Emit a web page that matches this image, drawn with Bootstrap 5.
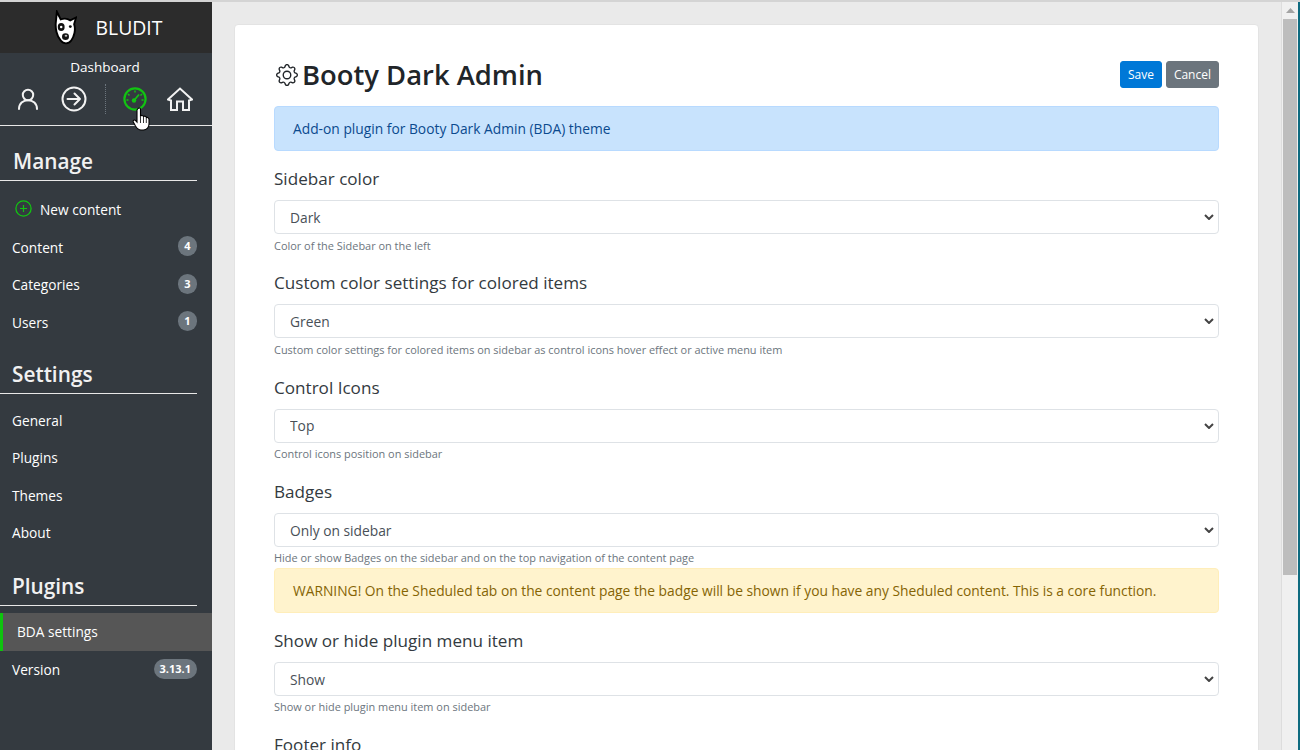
<!DOCTYPE html>
<html lang="en">
<head>
    <meta charset="UTF-8">
    <meta name="viewport" content="width=device-width, initial-scale=1.0">
    <title>Booty Dark Admin - Bludit</title>
    <link href="https://cdn.jsdelivr.net/npm/bootstrap@5.3.0/dist/css/bootstrap.min.css" rel="stylesheet">
    <style>
        html, body { height: 750px; overflow: hidden; }
        body { font-family: "Open Sans", "Noto Sans", sans-serif; background: #eaeaea; color: #212529; border-top: 2px solid #d4d4d4; }
        .app-shell { height: 748px; overflow: hidden; }

        .side-panel { width: 212px; flex: none; background: #343a40; color: #fff; font-size: 13.7px; }
        .brand-bar { height: 51px; background: #2c2c2c; font-size: 19.4px; gap: 19px; padding-left: 4px; }
        .ctrl-title { height: 28px; padding: 4px 2px 0 0; font-size: 13.5px; }
        .ctrl-row { height: 45px; position: relative; border-bottom: 1px solid #e8e8e8; }
        .ctrl-icons { padding: 0 0 9px 16px; height: 45px; }
        .ctrl-out { margin-left: 21px; }
        .ctrl-sep { width: 0; height: 30px; border-left: 1px dotted #6c757d; margin: 0 17px 0 18px; }
        .ctrl-home { margin-left: 20px; }
        .hand-cursor { position: absolute; left: 132px; top: 26px; }
        .side-head { font-size: 20.8px; font-weight: 600; color: #f1f1f1; margin: 18.5px 15px 0 0; padding: 0 0 4px 12px; border-bottom: 1px solid #e8e8e8; line-height: 30px; }
        .first-head { margin-top: 20px; padding-left: 13px; }
        .second-head { margin-top: 17px; }
        .side-link { display: flex; justify-content: space-between; height: 37.5px; padding: 0 15px 0 12px; align-items: center; color: #fff; text-decoration: none; }
        .side-link.after-head { margin-top: 8.5px; }
        .side-link.new-link { height: 38.5px; margin-top: 10px; }
        .side-link.is-active { background: #565656; border-left: 3px solid #0ec40e; padding-left: 14px; height: 38px; margin-top: 7px; }
        .side-link.version-link { height: 39px; }
        .side-pill { background: #6c757d; color: #fff; font-size: 11px; font-weight: 700; border-radius: 11px; min-width: 19px; height: 20px; line-height: 20px; padding: 0 6px; text-align: center; margin-top: -4px; }
        .pill-round { padding: 0 5px; }
        .new-icon { margin: -4px 0 0 3px; }

        .main-area { flex: 1 1 auto; min-width: 0; padding: 22px 22px 0 22px; border-right: 1px solid #ddd; }
        .form-sheet { background: #fff; border: 1px solid #e3e3e3; border-radius: 4px; padding: 33px 39px 0; height: 760px; }
        .sheet-title { font-size: 27.4px; font-weight: 600; line-height: 34px; margin: 0 0 2px; display: flex; align-items: center; gap: 4px; }
        .title-gear { margin-left: 2px; }
        .act-wrap { margin-top: -3px; }
        .act-btn { font-size: 12px; padding: 0 7px; height: 27px; line-height: 25px; border-radius: 3px; }
        .btn-save { background: #0078d7; border-color: #0078d7; color: #fff; }
        .note-box { font-size: 13.8px; padding: 13px 18px; margin: 12px 0 15px; height: 45px; line-height: 18px; border-radius: 4px; }
        .note-info { background: #c8e3fd; border: 1px solid #b8daff; color: #0b4a8e; }
        .note-warn { background: #fff3cd; border: 1px solid #ffeeba; color: #856404; margin: 3px 0 15px; }
        .field-label { font-size: 17.1px; line-height: 24px; padding-top: 1px; margin-bottom: 9px; color: #333a40; display: block; }
        .field-select { font-size: 13.8px; height: 34px; padding: 2px 36px 0 15px; border-radius: 4px; color: #495057;
            background-image: url("data:image/svg+xml,%3csvg xmlns='http://www.w3.org/2000/svg' viewBox='0 0 10 6'%3e%3cpath fill='none' stroke='%23444' stroke-width='2' d='M1 1l4 4 4-4'/%3e%3c/svg%3e");
            background-size: 10px 6px; background-position: right 4px center; }
        .field-help { font-size: 10.95px; line-height: 15px; color: #6c757d; margin: 3.5px 0 17.8px; }
        .field-help.tight { margin-bottom: -.5px; }

        .fake-scroll { width: 16px; flex: none; background: #f0f0f0; }
        .scroll-arrow { height: 17px; color: #a3a3a3; display: flex; justify-content: center; padding-top: 6px; }
        .scroll-thumb { height: 556px; margin: 0 1px; background: #bdbdbd; }
        .window-edge { width: 2px; flex: none; background: #0f6b80; }
    </style>
</head>
<body>
    <div class="app-shell d-flex">
        <aside class="side-panel">
            <div class="brand-bar d-flex align-items-center justify-content-center">
                <svg width="23" height="36" viewBox="0 0 24 36">
                    <path d="M3 1 L7 9 C10 8 14 8 17 10 L23 7 L21 14 C23 20 21 27 18 31 C15 35 10 35 7 31 C3 27 1 18 2 11 Z" fill="#fff" stroke="#000" stroke-width="2"/>
                    <ellipse cx="7.5" cy="17" rx="3.6" ry="4.2" fill="#111"/>
                    <circle cx="7.5" cy="17" r="1.3" fill="#fff"/>
                    <circle cx="17" cy="16.5" r="1.5" fill="#111"/>
                    <ellipse cx="12" cy="27" rx="3.6" ry="3.4" fill="#111"/>
                    <ellipse cx="12.5" cy="26" rx="1.4" ry="1" fill="#bbb"/>
                </svg>
                <span>BLUDIT</span>
            </div>
            <div class="ctrl-title text-center">Dashboard</div>
            <div class="ctrl-row">
                <div class="ctrl-icons d-flex align-items-center">
                    <svg width="24" height="24" viewBox="0 0 24 24" fill="none" stroke="#f2f2f2" stroke-width="2">
                        <circle cx="12" cy="8" r="5.2"/>
                        <path d="M3 22 C3 16.5 7 13.3 12 13.3 S21 16.5 21 22" stroke-linecap="round"/>
                    </svg>
                    <svg class="ctrl-out" width="26" height="26" viewBox="0 0 26 26" fill="none" stroke="#f2f2f2" stroke-width="2">
                        <circle cx="13" cy="13" r="11.5"/>
                        <path d="M6.5 13 H19 M13.5 7.5 L19 13 L13.5 18.5" stroke-linecap="round" stroke-linejoin="round"/>
                    </svg>
                    <div class="ctrl-sep"></div>
                    <svg width="24" height="24" viewBox="0 0 24 24" fill="none" stroke="#12c312" stroke-width="2.2">
                        <circle cx="12" cy="12" r="10.6"/>
                        <path d="M12 3.5 V5.5 M5 7 L6.5 8.5 M3.5 13 H5.5 M19 7 L17.5 8.5 M20.5 13 H18.5" stroke-width="1.5"/>
                        <path d="M11 13.5 L16 7.5" stroke-width="1.8"/>
                        <circle cx="11" cy="13.5" r="2.2" fill="#12c312" stroke="none"/>
                    </svg>
                    <svg class="ctrl-home" width="26" height="24" viewBox="0 0 26 24" fill="none" stroke="#f2f2f2" stroke-width="2">
                        <path d="M1 12.5 L13 1.5 L25 12.5 L22 13.5 V23 H16 V14.5 H10 V23 H4 V13.5 Z"/>
                    </svg>
                </div>
                <svg class="hand-cursor" width="19" height="24" viewBox="0 0 19 24">
                    <path d="M6 1.5 C7 .5 8.5 1 8.5 2.5 V9 C9.5 8 11 8.3 11.5 9.5 C12.5 8.8 14 9.2 14.3 10.5 C15.5 10 17 10.8 17 12.5 V17 C17 20 15 23 11.5 23 H9 C6 23 5 21.5 3.5 19 L1.3 15 C.6 13.5 2.3 12.3 3.6 13.5 L5 15 V3 Z" fill="#fff" stroke="#000" stroke-width="1.1"/>
                    <path d="M8.5 10 V16 M11.5 10 V16 M14.3 11 V16" stroke="#000" stroke-width=".8"/>
                </svg>
            </div>

            <div class="side-head first-head">Manage</div>
            <a href="#" class="side-link new-link">
                <span class="d-flex align-items-center gap-2">
                    <svg class="new-icon" width="17" height="17" viewBox="0 0 17 17" fill="none" stroke="#12c312">
                        <circle cx="8.5" cy="8.5" r="7.6" stroke-width="1.3"/>
                        <path d="M8.5 5 V12 M5 8.5 H12" stroke-width="1.2"/>
                    </svg>
                    New content
                </span>
            </a>
            <a href="#" class="side-link"><span>Content</span><span class="side-pill pill-round">4</span></a>
            <a href="#" class="side-link"><span>Categories</span><span class="side-pill pill-round">3</span></a>
            <a href="#" class="side-link"><span>Users</span><span class="side-pill pill-round">1</span></a>

            <div class="side-head second-head">Settings</div>
            <a href="#" class="side-link after-head">General</a>
            <a href="#" class="side-link">Plugins</a>
            <a href="#" class="side-link">Themes</a>
            <a href="#" class="side-link">About</a>

            <div class="side-head">Plugins</div>
            <a href="#" class="side-link is-active">BDA settings</a>
            <a href="#" class="side-link version-link"><span>Version</span><span class="side-pill">3.13.1</span></a>
        </aside>

        <main class="main-area">
            <div class="form-sheet">
                <div class="d-flex justify-content-between align-items-center">
                    <h2 class="sheet-title">
                        <svg class="title-gear" width="22" height="22" viewBox="0 0 16 16" fill="#212529">
                            <path d="M8 4.754a3.246 3.246 0 1 0 0 6.492 3.246 3.246 0 0 0 0-6.492zM5.754 8a2.246 2.246 0 1 1 4.492 0 2.246 2.246 0 0 1-4.492 0z"/>
                            <path d="M9.796 1.343c-.527-1.79-3.065-1.79-3.592 0l-.094.319a.873.873 0 0 1-1.255.52l-.292-.16c-1.64-.892-3.433.902-2.54 2.541l.159.292a.873.873 0 0 1-.52 1.255l-.319.094c-1.79.527-1.79 3.065 0 3.592l.319.094a.873.873 0 0 1 .52 1.255l-.16.292c-.892 1.64.901 3.434 2.541 2.54l.292-.159a.873.873 0 0 1 1.255.52l.094.319c.527 1.79 3.065 1.79 3.592 0l.094-.319a.873.873 0 0 1 1.255-.52l.292.16c1.64.893 3.434-.902 2.54-2.541l-.159-.292a.873.873 0 0 1 .52-1.255l.319-.094c1.79-.527 1.79-3.065 0-3.592l-.319-.094a.873.873 0 0 1-.52-1.255l.16-.292c.893-1.64-.902-3.433-2.541-2.54l-.292.159a.873.873 0 0 1-1.255-.52l-.094-.319zm-2.633.283c.246-.835 1.428-.835 1.674 0l.094.319a1.873 1.873 0 0 0 2.693 1.115l.291-.16c.764-.415 1.6.42 1.184 1.185l-.159.292a1.873 1.873 0 0 0 1.116 2.692l.318.094c.835.246.835 1.428 0 1.674l-.319.094a1.873 1.873 0 0 0-1.115 2.693l.16.291c.415.764-.42 1.6-1.185 1.184l-.291-.159a1.873 1.873 0 0 0-2.693 1.116l-.094.318c-.246.835-1.428.835-1.674 0l-.094-.319a1.873 1.873 0 0 0-2.692-1.115l-.292.16c-.764.415-1.6-.42-1.184-1.185l.159-.291A1.873 1.873 0 0 0 1.945 8.93l-.319-.094c-.835-.246-.835-1.428 0-1.674l.319-.094A1.873 1.873 0 0 0 3.06 4.377l-.16-.292c-.415-.764.42-1.6 1.185-1.184l.292.159a1.873 1.873 0 0 0 2.692-1.115l.094-.319z"/>
                        </svg>
                        Booty Dark Admin
                    </h2>
                    <div class="act-wrap d-flex gap-1">
                        <button class="btn act-btn btn-save">Save</button>
                        <button class="btn btn-secondary act-btn">Cancel</button>
                    </div>
                </div>

                <div class="note-box note-info">Add-on plugin for Booty Dark Admin (BDA) theme</div>

                <label class="field-label">Sidebar color</label>
                <select class="form-select field-select"><option>Dark</option></select>
                <div class="field-help">Color of the Sidebar on the left</div>

                <label class="field-label">Custom color settings for colored items</label>
                <select class="form-select field-select"><option>Green</option></select>
                <div class="field-help">Custom color settings for colored items on sidebar as control icons hover effect or active menu item</div>

                <label class="field-label">Control Icons</label>
                <select class="form-select field-select"><option>Top</option></select>
                <div class="field-help">Control icons position on sidebar</div>

                <label class="field-label">Badges</label>
                <select class="form-select field-select"><option>Only on sidebar</option></select>
                <div class="field-help tight">Hide or show Badges on the sidebar and on the top navigation of the content page</div>
                <div class="note-box note-warn">WARNING! On the Sheduled tab on the content page the badge will be shown if you have any Sheduled content. This is a core function.</div>

                <label class="field-label">Show or hide plugin menu item</label>
                <select class="form-select field-select"><option>Show</option></select>
                <div class="field-help">Show or hide plugin menu item on sidebar</div>

                <label class="field-label">Footer info</label>
            </div>
        </main>

        <div class="fake-scroll">
            <div class="scroll-arrow">
                <svg width="9" height="5" viewBox="0 0 9 5" fill="currentColor"><path d="M4.5 0 L9 5 H0 Z"/></svg>
            </div>
            <div class="scroll-thumb"></div>
        </div>
        <div class="window-edge"></div>
    </div>
    <script src="https://cdn.jsdelivr.net/npm/bootstrap@5.3.0/dist/js/bootstrap.bundle.min.js"></script>
</body>
</html>
